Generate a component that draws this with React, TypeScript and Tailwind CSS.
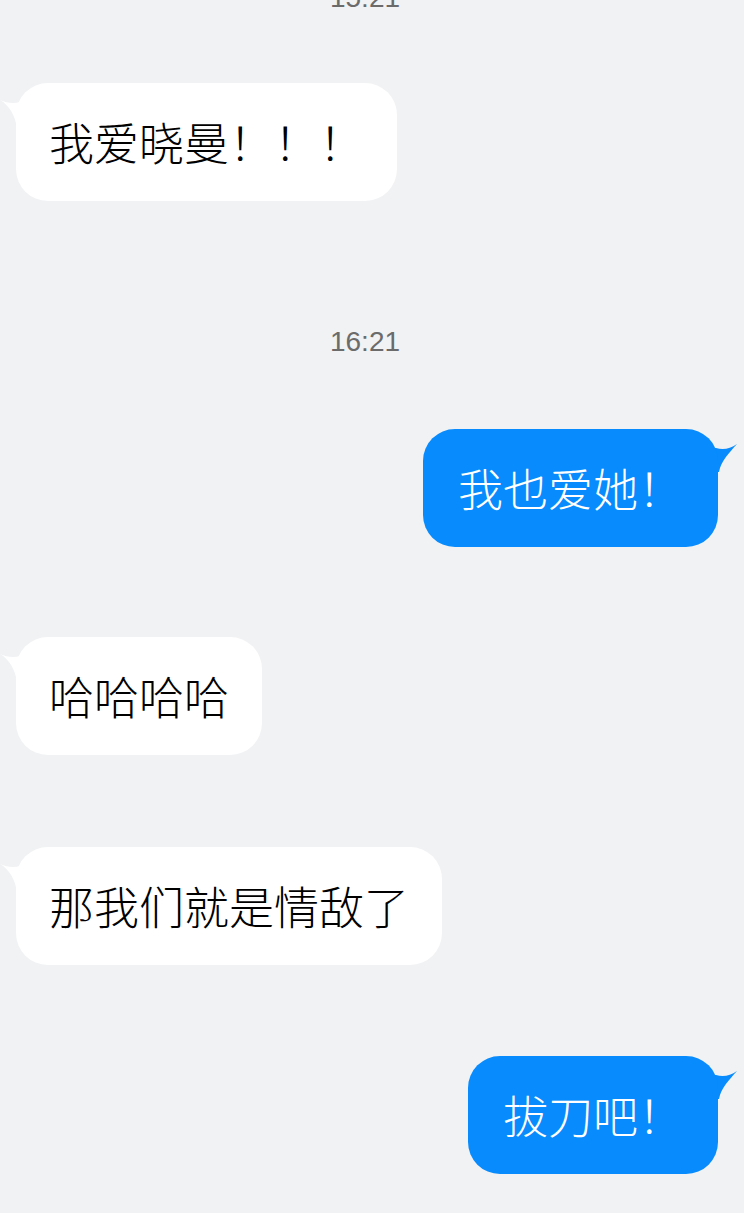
type Msg =
  | { kind: 'time'; text: string; mt: number }
  | { kind: 'in' | 'out'; text: string; mt: number };

const messages: Msg[] = [
  { kind: 'time', text: '15:21', mt: -22 },
  { kind: 'in', text: '我爱晓曼！！！', mt: 65 },
  { kind: 'time', text: '16:21', mt: 121 },
  { kind: 'out', text: '我也爱她！', mt: 67 },
  { kind: 'in', text: '哈哈哈哈', mt: 90 },
  { kind: 'in', text: '那我们就是情敌了', mt: 92 },
  { kind: 'out', text: '拔刀吧！', mt: 91 }
];

const cjk = { fontFamily: '"Noto Sans CJK SC", "Noto Sans", sans-serif' };

function TailLeft() {
  return (
    <svg
      className="absolute left-[-16px] top-[15px]"
      width="26"
      height="30"
      viewBox="0 0 26 30"
    >
      <path d="M0 2 C7 5 13 6 20 4 L26 4 L26 30 L17 30 C15 17 9 7 0 2 Z" fill="#ffffff" />
    </svg>
  );
}

function TailRight() {
  return (
    <svg
      className="absolute right-[-19px] top-[13px]"
      width="29"
      height="30"
      viewBox="0 0 29 30"
    >
      <path d="M29 2 C22 7 15 8 8 6 L0 6 L0 30 L11 30 C13 19 21 11 29 2 Z" fill="#078bfd" />
    </svg>
  );
}

function Bubble({ kind, text }: { kind: 'in' | 'out'; text: string }) {
  if (kind === 'in') {
    return (
      <div className="flex justify-start pl-[16px]">
        <div className="relative">
          <TailLeft />
          <div
            className="relative rounded-[32px] bg-white px-[33px] py-[33px] text-[45px] font-light leading-[52px] text-black"
            style={cjk}
          >
            {text}
          </div>
        </div>
      </div>
    );
  }
  return (
    <div className="flex justify-end pr-[26px]">
      <div className="relative">
        <TailRight />
        <div
          className="relative rounded-[32px] bg-[#078bfd] px-[35px] py-[33px] text-[45px] font-light leading-[52px] text-white"
          style={cjk}
        >
          {text}
        </div>
      </div>
    </div>
  );
}

export default function App() {
  return (
    <div className="h-[1213px] overflow-hidden bg-[#f1f2f4]">
      <div className="flex flex-col">
        {messages.map((m, i) => (
          <div key={i} style={{ marginTop: m.mt }}>
            {m.kind === 'time' ? (
              <p
                className="pr-[14px] text-center text-[28px] leading-[40px] text-[#6b6b6b]"
                style={{ fontFamily: '"Liberation Sans", Arial, sans-serif' }}
              >
                {m.text}
              </p>
            ) : (
              <Bubble kind={m.kind} text={m.text} />
            )}
          </div>
        ))}
      </div>
    </div>
  );
}
